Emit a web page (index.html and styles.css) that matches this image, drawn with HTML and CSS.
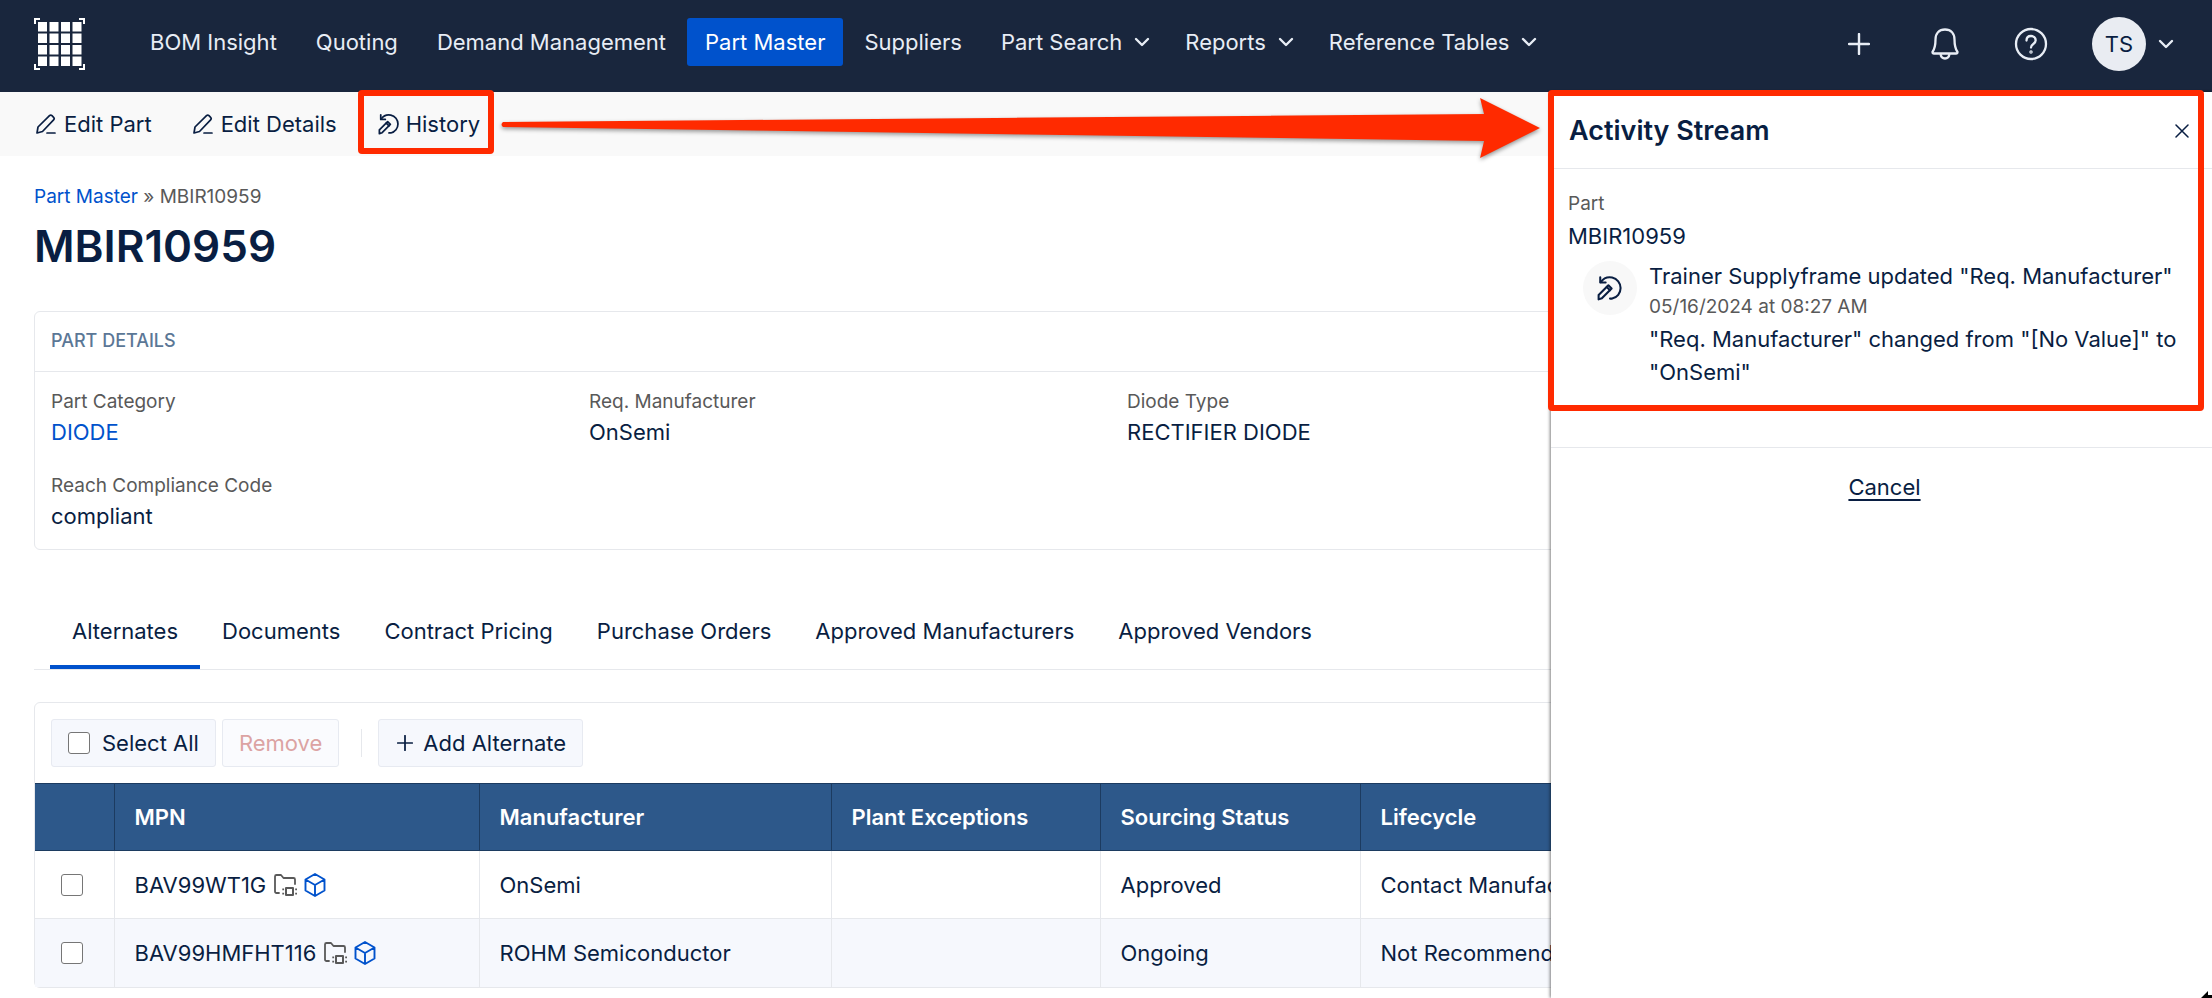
FILE: index.html
```html
<!DOCTYPE html>
<html lang="en">
<head>
<meta charset="utf-8">
<title>MBIR10959 - Part Master</title>
<link rel="stylesheet" href="styles.css">
</head>
<body>
<svg class="sprite" aria-hidden="true">
  <symbol id="chevron" viewBox="0 0 16 16"><path d="M2 5l6 6 6-6" fill="none" stroke="currentColor" stroke-width="2.4" stroke-linecap="round" stroke-linejoin="round"/></symbol>
  <symbol id="plus" viewBox="0 0 22 22"><path d="M11 1v20M1 11h20" fill="none" stroke="currentColor" stroke-width="2.4" stroke-linecap="round"/></symbol>
  <symbol id="pencil" viewBox="0 0 20 20"><path d="M1 19l1-6L13.500 1.700a1.800 1.800 0 0 1 2.500 0l1.600 1.600a1.800 1.800 0 0 1 0 2.500L6.500 17.500zM11 19h8" fill="none" stroke="currentColor" stroke-width="1.700" stroke-linecap="round" stroke-linejoin="round"/></symbol>
  <symbol id="history" viewBox="0 0 24 24"><g fill="none" stroke="currentColor" stroke-width="1.900" stroke-linecap="round" stroke-linejoin="round"><path d="M3 2v5h5"/><path d="M3.500 6.500C6 3 10 1.500 14 2.300a10 10 0 0 1 0 19.500h-2"/><path d="M1.500 22.500v-4L10.500 9.500l3 3-9 9z"/><path d="M9 11l3 3"/></g></symbol>
  <symbol id="folder" viewBox="0 0 24 24"><g fill="none" stroke="currentColor" stroke-width="1.800" stroke-linecap="round" stroke-linejoin="round"><path d="M6 20H3.500A1.500 1.500 0 0 1 2 18.500v-15A1.500 1.500 0 0 1 3.500 2H8l2.500 3h10A1.500 1.500 0 0 1 22 6.500V11"/><path d="M13 15h7v7h-7z" stroke-width="2"/></g><path d="M9.300 15.500h1.800v1.800H9.300zM9.300 19.800h1.800v1.800H9.300zM22.200 15.500H24v1.800h-1.800zM22.200 19.800H24v1.800h-1.800z" fill="currentColor"/></symbol>
  <symbol id="cube" viewBox="0 0 22 24"><path d="M11 1l9.500 5.500v11L11 23l-9.500-5.500v-11zM1.500 6.500L11 12l9.500-5.500M11 12v11" fill="none" stroke="currentColor" stroke-width="1.900" stroke-linejoin="round"/></symbol>
</svg>

<header class="topbar">
  <a class="logo" href="#" aria-label="Home">
    <svg viewBox="0 0 51 52" width="51" height="52" aria-hidden="true">
      <path d="M1 6V1h5M45 1h5v5M50 46v5h-5M6 51H1v-5" fill="none" stroke="#fff" stroke-width="2"/>
      <g fill="#fff">
        <path d="M4 4h9v9.500H4zM15.500 4h9v9.500h-9zM27 4h9v9.500h-9zM38.500 4h9v9.500h-9z"/>
        <path d="M4 15.500h9V25H4zM15.500 15.500h9V25h-9zM27 15.500h9V25h-9zM38.500 15.500h9V25h-9z"/>
        <path d="M4 27h9v9.500H4zM15.500 27h9v9.500h-9zM27 27h9v9.500h-9zM38.500 27h9v9.500h-9z"/>
        <path d="M4 38.500h9V48H4zM15.500 38.500h9V48h-9zM27 38.500h9V48h-9zM38.500 38.500h9V48h-9z"/>
      </g>
    </svg>
  </a>
  <nav class="main-nav" aria-label="Main">
    <a href="#">BOM Insight</a>
    <a href="#">Quoting</a>
    <a href="#">Demand Management</a>
    <a class="current" href="#" aria-current="page">Part Master</a>
    <a href="#">Suppliers</a>
    <button type="button">Part Search <svg class="chevron"><use href="#chevron"/></svg></button>
    <button type="button">Reports <svg class="chevron"><use href="#chevron"/></svg></button>
    <button type="button">Reference Tables <svg class="chevron"><use href="#chevron"/></svg></button>
  </nav>
  <div class="tools">
    <button type="button" aria-label="Create"><svg width="22" height="22"><use href="#plus"/></svg></button>
    <button type="button" aria-label="Notifications"><svg width="28" height="32" viewBox="0 0 28 32" fill="none" stroke="currentColor" stroke-width="2.300" stroke-linejoin="round"><path d="M14 1.500c-6 0-9.500 4-9.500 10 0 6-.5 9-3 12.500 0 1 .5 1.500 1.500 1.500h22c1 0 1.500-.5 1.500-1.500-2.500-3.500-3-6.500-3-12.500 0-6-3.500-10-9.500-10z"/><path d="M9.500 26c.5 3 2 4.500 4.500 4.500s4-1.500 4.500-4.500"/></svg></button>
    <button type="button" aria-label="Help"><svg width="34" height="34" viewBox="0 0 34 34" fill="none" stroke="currentColor" stroke-width="2.300" stroke-linecap="round"><circle cx="17" cy="17" r="15"/><path d="M12.500 13.500c0-3 2-4.500 4.500-4.500s4.700 1.600 4.700 4.300c0 3.700-4.700 3.700-4.700 7.200"/><circle cx="17" cy="25" r=".6"/></svg></button>
    <button class="account" type="button" aria-label="Account TS"><span class="avatar">TS</span><svg class="chevron"><use href="#chevron"/></svg></button>
  </div>
</header>

<div class="actions">
  <button type="button"><svg width="20" height="20"><use href="#pencil"/></svg>Edit Part</button>
  <button type="button"><svg width="20" height="20"><use href="#pencil"/></svg>Edit Details</button>
  <button class="history" type="button"><svg width="22" height="22"><use href="#history"/></svg>History<span class="mark"></span></button>
  <svg class="arrow" viewBox="0 0 1040 64" preserveAspectRatio="none" aria-hidden="true"><path d="M2 26L984 18 980 2l60 30-60 30 4-17L2 31q-3-2.500 0-5z" fill="#ff2a00"/></svg>
</div>

<main class="page">
  <nav class="crumbs" aria-label="Breadcrumb"><a href="#">Part Master</a> » MBIR10959</nav>
  <h1>MBIR10959</h1>

  <section class="card details">
    <h2>PART DETAILS</h2>
    <dl>
      <div><dt>Part Category</dt><dd><a href="#">DIODE</a></dd></div>
      <div><dt>Req. Manufacturer</dt><dd>OnSemi</dd></div>
      <div><dt>Diode Type</dt><dd>RECTIFIER DIODE</dd></div>
      <div class="row-start"><dt>Reach Compliance Code</dt><dd>compliant</dd></div>
    </dl>
  </section>

  <nav class="tabs" aria-label="Part sections">
    <a class="current" href="#">Alternates</a>
    <a href="#">Documents</a>
    <a href="#">Contract Pricing</a>
    <a href="#">Purchase Orders</a>
    <a href="#">Approved Manufacturers</a>
    <a href="#">Approved Vendors</a>
  </nav>

  <section class="card">
    <div class="bulk">
      <label class="btn"><input type="checkbox">Select All</label>
      <button class="btn remove" type="button" disabled>Remove</button>
      <span class="rule"></span>
      <button class="btn add" type="button"><svg width="16" height="16"><use href="#plus"/></svg>Add Alternate</button>
    </div>
    <table>
      <colgroup><col class="c-check"><col class="c-mpn"><col class="c-maker"><col class="c-plant"><col class="c-status"><col></colgroup>
      <thead>
        <tr><th></th><th>MPN</th><th>Manufacturer</th><th>Plant Exceptions</th><th>Sourcing Status</th><th>Lifecycle</th></tr>
      </thead>
      <tbody>
        <tr>
          <td><input type="checkbox" aria-label="Select BAV99WT1G"></td>
          <td><span class="mpn">BAV99WT1G <svg class="folder"><use href="#folder"/></svg><svg class="cube"><use href="#cube"/></svg></span></td>
          <td>OnSemi</td><td></td><td>Approved</td><td>Contact Manufacturer</td>
        </tr>
        <tr>
          <td><input type="checkbox" aria-label="Select BAV99HMFHT116"></td>
          <td><span class="mpn">BAV99HMFHT116 <svg class="folder"><use href="#folder"/></svg><svg class="cube"><use href="#cube"/></svg></span></td>
          <td>ROHM Semiconductor</td><td></td><td>Ongoing</td><td>Not Recommended</td>
        </tr>
      </tbody>
    </table>
  </section>
</main>

<aside class="panel" aria-label="Activity Stream">
  <div class="stream">
    <div class="panel-head">
      <h2>Activity Stream</h2>
      <button type="button" aria-label="Close"><svg width="14" height="14" viewBox="0 0 14 14"><path d="M1 1l12 12M13 1L1 13" fill="none" stroke="currentColor" stroke-width="1.500" stroke-linecap="round"/></svg></button>
    </div>
    <div class="panel-body">
      <p class="muted">Part</p>
      <p class="part">MBIR10959</p>
      <div class="entry">
        <span class="badge"><svg width="26" height="26"><use href="#history"/></svg></span>
        <div>
          <p>Trainer Supplyframe updated "Req. Manufacturer"</p>
          <p class="muted">05/16/2024 at 08:27 AM</p>
          <p class="change">"Req. Manufacturer" changed from "[No Value]" to "OnSemi"</p>
        </div>
      </div>
    </div>
    <span class="mark"></span>
  </div>
  <div class="panel-foot"><button type="button">Cancel</button></div>
  <svg class="pointer" viewBox="0 0 12 8" aria-hidden="true"><path d="M1 8l7-7v4h4v3z"/></svg>
</aside>
</body>
</html>
```
FILE: styles.css
```css
* { box-sizing: border-box; }

:root {
  --ink: #091e42;
  --blue: #0052cc;
  --grey: #595959;
  --line: #e6e8ec;
  --soft: #f6f8fd;
  --red: #ff2a00;
}

body {
  position: relative;
  margin: 0;
  min-height: 100vh;
  overflow: hidden;
  background: #fff;
  color: var(--ink);
  font: 22px/30px Inter, "Liberation Sans", sans-serif;
}

h1, h2, p, dl, dd { margin: 0; }
a { color: var(--blue); text-decoration: none; }
svg { flex: none; }
button {
  padding: 0;
  border: 0;
  background: none;
  color: inherit;
  font: inherit;
}
.sprite { position: absolute; width: 0; height: 0; }
.chevron { width: 16px; height: 16px; }

.topbar {
  display: flex;
  align-items: center;
  height: 92px;
  padding: 0 38px 0 34px;
  background: #19263d;
  color: #e8edf5;
  white-space: nowrap;
}
.logo { display: flex; margin: 0 47px 4px 0; }
.main-nav { display: flex; gap: 3px; margin-bottom: 8px; }
.main-nav a, .main-nav button {
  display: flex;
  align-items: center;
  gap: 12px;
  height: 48px;
  padding: 0 18px;
  border-radius: 3px;
  color: inherit;
}
.main-nav button { padding-right: 14px; }
.main-nav .current { background: var(--blue); color: #fff; }
.tools { display: flex; align-items: center; margin: 0 0 4px auto; }
.tools button { display: flex; align-items: center; justify-content: center; width: 86px; }
.tools .account { width: auto; gap: 12px; margin-left: 18px; }
.avatar {
  display: grid;
  place-items: center;
  width: 54px;
  height: 54px;
  border-radius: 50%;
  background: #e9ecf2;
  color: var(--ink);
}

.actions {
  position: relative;
  display: flex;
  align-items: center;
  gap: 41px;
  height: 64px;
  padding: 0 36px;
  background: #f9f9f9;
}
.actions button { display: flex; align-items: center; gap: 8px; }
.actions .history { position: relative; gap: 6px; }
.mark {
  position: absolute;
  border: 6px solid var(--red);
  border-radius: 4px;
  pointer-events: none;
}
.history .mark { inset: -19px -14px -15px -20px; }
.arrow {
  position: absolute;
  top: 4px;
  right: 672px;
  left: 501px;
  width: calc(100% - 1173px);
  height: 64px;
  filter: drop-shadow(0 2px 2px rgb(0 0 0 / 40%));
}

.page { padding: 26px 34px 0; }
.crumbs { color: var(--grey); font-size: 19px; }
h1 { padding: 6px 0 37px; font-size: 44px; font-weight: 600; line-height: 56px; }
.card { border: 1px solid var(--line); border-radius: 6px; }
.details h2 {
  padding: 14px 16px 15px;
  border-bottom: 1px solid var(--line);
  color: #5b7796;
  font-size: 18px;
  font-weight: 500;
}
.details dl {
  display: grid;
  grid-template-columns: repeat(4, 1fr);
  gap: 24px 42px;
  padding: 15px 16px 18px;
}
.row-start { grid-column: 1; }
dt { color: var(--grey); font-size: 19px; }

.tabs {
  display: flex;
  margin: 62px 0 32px;
  padding: 0 16px;
  border-bottom: 1px solid var(--line);
}
.tabs a {
  padding: 4px 22px 19px;
  border-bottom: 4px solid transparent;
  color: var(--ink);
}
.tabs .current { border-color: var(--blue); }

.bulk { display: flex; align-items: center; gap: 6px; padding: 16px; }
.btn {
  display: flex;
  align-items: center;
  gap: 12px;
  height: 48px;
  padding: 0 16px;
  border: 1px solid #e7eaf1;
  border-radius: 3px;
  background: var(--soft);
}
.add { gap: 10px; padding-left: 18px; }
.remove { background: #fafbfe; color: #dca3a3; }
.rule { width: 1px; height: 28px; margin: 0 10px 0 16px; background: var(--line); }
input[type="checkbox"] {
  appearance: none;
  width: 22px;
  height: 22px;
  margin: 0;
  border: 1px solid #767676;
  border-radius: 3px;
  background: #fff;
}

table { width: 100%; border-collapse: collapse; table-layout: fixed; }
.c-check { width: 79px; }
.c-mpn { width: 365px; }
.c-maker { width: 352px; }
.c-plant { width: 269px; }
.c-status { width: 260px; }
th, td { padding: 0 20px; border-left: 1px solid var(--line); text-align: left; }
th { height: 67px; border: 1px solid #1c3b60; background: #2d588a; color: #fff; font-weight: 600; }
td { height: 68px; }
tbody tr + tr { border-top: 1px solid var(--line); background: var(--soft); }
th:first-child, td:first-child { padding: 0 0 0 26px; border-left: 0; }
td input { display: block; }
.mpn { display: flex; align-items: center; gap: 7px; }
.folder { width: 24px; height: 24px; color: #595959; }
.cube { width: 22px; height: 24px; color: var(--blue); }

.panel {
  position: absolute;
  top: 92px;
  right: 0;
  bottom: 0;
  width: 661px;
  background: #fff;
  box-shadow: -1px 0 3px rgb(0 0 0 / 50%);
  clip-path: inset(-3px 0 0 -6px);
}
.stream { position: relative; padding-bottom: 38px; border-bottom: 1px solid var(--line); }
.stream .mark { inset: -2px 8px 36px -3px; }
.panel-head {
  display: flex;
  align-items: center;
  justify-content: space-between;
  padding: 21px 23px 19px 18px;
  border-bottom: 1px solid var(--line);
}
.panel-head h2 { font-size: 27px; font-weight: 600; line-height: 36px; }
.panel-head button { display: flex; }
.panel-body { padding: 20px 24px 20px 17px; }
.muted { color: var(--grey); font-size: 19px; }
.part { padding: 1px 0; line-height: 32px; }
.entry { display: flex; gap: 12px; padding: 8px 0 0 15px; }
.badge {
  display: grid;
  flex: none;
  place-items: center;
  width: 54px;
  height: 54px;
  border-radius: 50%;
  background: #f8f8f8;
}
.entry .muted { line-height: 32px; }
.change { line-height: 33px; }
.panel-foot { display: flex; justify-content: center; padding: 24px 0 24px 6px; }
.panel-foot button { text-decoration: underline; text-underline-offset: 4px; }
.pointer { position: absolute; right: 0; bottom: 0; width: 12px; height: 8px; }
```
